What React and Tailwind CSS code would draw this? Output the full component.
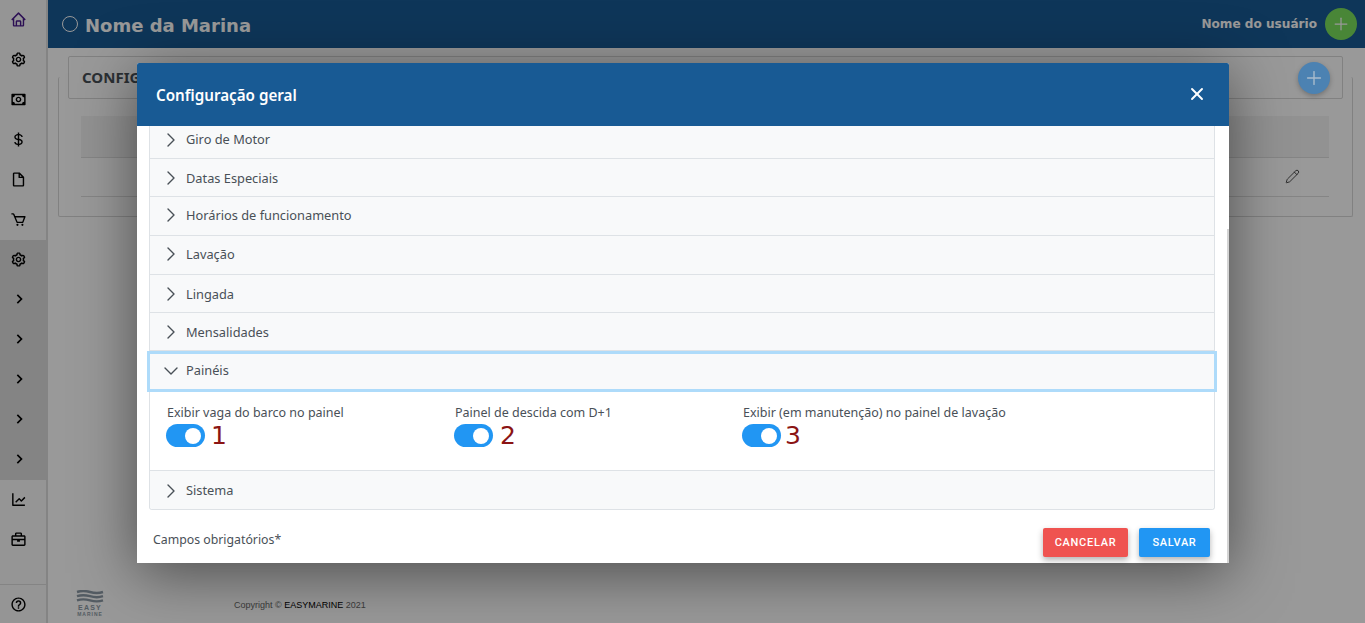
import React from "react";
import { ChevronRight, ChevronDown, X, Plus, Pencil } from "lucide-react";
import { BiHome, BiCog, BiMoney, BiDollar, BiFileBlank, BiCart, BiLineChart, BiBriefcase, BiHelpCircle, BiChevronRight } from "react-icons/bi";

const noto = "font-['Noto_Sans',sans-serif]";

function Side({ Icon, color = "text-black", chev }) {
  return (
    <div className="h-10 flex items-center justify-center w-[46px] pr-[9px] pb-[2px]">
      <Icon size={chev ? 20 : 17} className={color} />
    </div>
  );
}

function Row({ label, h = "h-[38.6px]", dy = "", ldy = "" }) {
  return (
    <div className={`${h} flex items-center border-b border-[#dee2e6] bg-[#f8f9fa] pl-[9px]`}>
      <ChevronRight size={24} strokeWidth={1.4} className={`text-[#495057] -mt-[3px] ${dy}`} />
      <span className={`ml-[3px] text-[12.8px] text-[#495057] ${noto} ${dy} ${ldy}`}>{label}</span>
    </div>
  );
}

function Toggle({ label, n, cls, numCls = "ml-[6px]" }) {
  return (
    <div className={cls}>
      <div className={`ml-[1px] text-[12.5px] leading-[17px] text-[#495057] ${noto}`}>{label}</div>
      <div className="flex items-center mt-[3px]">
        <div className="w-[39px] h-[23px] rounded-full bg-[#2196f3] flex items-center justify-end pr-[4px]">
          <div className="w-[16px] h-[16px] rounded-full bg-white" />
        </div>
        <span className={`${numCls} text-[25px] leading-[23px] text-[#8b1414] font-['DejaVu_Sans',sans-serif]`}>{n}</span>
      </div>
    </div>
  );
}

export default function App() {
  return (
    <div className="relative w-[1365px] h-[623px] overflow-hidden bg-white flex">
      <aside className="w-[48px] h-full border-r-2 border-[#dcdcdc] bg-[#f8f8f8] flex flex-col shrink-0">
        <Side Icon={BiHome} color="text-[#4a1a8c]" />
        <Side Icon={BiCog} />
        <Side Icon={BiMoney} />
        <Side Icon={BiDollar} />
        <Side Icon={BiFileBlank} />
        <Side Icon={BiCart} />
        <div className="bg-[#dcdcdc] w-[46px]">
          <Side Icon={BiCog} />
          <Side Icon={BiChevronRight} chev />
          <Side Icon={BiChevronRight} chev />
          <Side Icon={BiChevronRight} chev />
          <Side Icon={BiChevronRight} chev />
          <Side Icon={BiChevronRight} chev />
        </div>
        <Side Icon={BiLineChart} />
        <Side Icon={BiBriefcase} />
        <div className="mt-auto h-[39px] border-t border-[#dcdcdc] flex items-center justify-center pr-[9px]">
          <BiHelpCircle size={17} className="text-black" />
        </div>
      </aside>
      <div className="flex-1 flex flex-col min-w-0">
        <header className="h-12 shrink-0 bg-[#185a94] flex items-center pl-[14px] pr-[8px]">
          <div className="w-4 h-4 rounded-full border-[1.5px] border-white -mt-[1px]" />
          <span className="ml-[7px] text-[18px] font-bold text-white font-['DejaVu_Sans',sans-serif] mt-[2px]">Nome da Marina</span>
          <span className="ml-auto text-[12.1px] font-bold text-white font-['DejaVu_Sans',sans-serif] mt-[1px]">Nome do usuário</span>
          <div className="ml-[8px] w-8 h-8 rounded-full bg-[#7bdf5d] flex items-center justify-center">
            <Plus size={20} strokeWidth={1.5} className="text-white" />
          </div>
        </header>
        <main className="flex-1 flex flex-col pl-[10px] pr-[12px] pt-2">
          <div className="relative h-[169px]">
            <div className="absolute left-[10px] right-[10px] top-0 h-[43px] border border-[#d8d8d8] rounded-[2px] flex items-center pl-[13px] bg-white">
              <span className={`text-[15px] font-bold text-[#495057] ${noto}`}>CONFIGURAÇÕES</span>
            </div>
            <div className="absolute left-0 right-0 top-[21px] h-[140px] border border-[#d8d8d8] rounded-[2px] border-t-0" />
            <div className="absolute left-[23px] right-[24px] top-[60px] h-[42px] bg-[#f4f4f4] border-b border-[#dedede]" />
            <div className="absolute left-[23px] right-[24px] top-[102px] h-[39px] border-b border-[#dedede]" />
            <div className="absolute right-[53px] top-[113px]">
              <Pencil size={15} strokeWidth={1.4} className="text-[#333]" />
            </div>
          </div>
          <footer className="mt-auto flex items-center h-[34px] mb-[3px]">
            <div className="ml-[18px] w-[28px] flex flex-col items-center">
              <svg width="28" height="13" viewBox="0 0 28 13" fill="none" stroke="#8c9aa6" strokeWidth="2.4">
                <path d="M1 2q6-2 13 0t13 0M1 6.2q6-2 13 0t13 0M1 10.4q6-2 13 0t13 0" />
              </svg>
              <span className="mt-[1px] text-[7px] leading-[7px] font-bold tracking-[1.2px] text-[#8c9aa6] font-['Liberation_Sans',sans-serif]">EASY</span>
              <span className="text-[5px] leading-[6px] font-bold tracking-[1px] text-[#8c9aa6] font-['Liberation_Sans',sans-serif]">MARINE</span>
            </div>
            <span className="ml-[130px] mt-[6px] text-[9px] text-[#666] font-['Liberation_Sans',sans-serif]">
              Copyright © <span className="text-black">EASYMARINE</span> 2021
            </span>
          </footer>
        </main>
      </div>

      {/* overlay */}
      <div className="absolute inset-0 bg-black/40 z-10" />
      <div className="absolute left-[1298px] top-[62px] w-8 h-8 rounded-full bg-[#4c82b2] z-20 flex items-center justify-center shadow-[0_2px_5px_rgba(0,0,0,0.25)]">
        <Plus size={22} strokeWidth={1.5} className="text-[#a9bccd]" />
      </div>

      {/* modal */}
      <div className="absolute z-30 left-[137px] top-[63px] w-[1092px] h-[500px] bg-white rounded-t-[2px] shadow-[0_10px_60px_rgba(0,0,0,0.5)] flex flex-col">
        <div className="h-[63px] shrink-0 bg-[#185a94] rounded-t-[2px] flex items-center justify-between pl-[19px] pr-[22px]">
          <span className={`text-[15.2px] font-semibold text-white ${noto} mt-[2px]`}>Configuração geral</span>
          <X size={20} strokeWidth={2.3} className="text-white -mt-[2px]" />
        </div>
        <div className="relative flex-1 flex flex-col min-h-0 pl-[12px] pr-[14px]">
          <div className="absolute right-0 top-[103px] bottom-0 w-[2px] bg-[#d4d4d4]" />
          <div className="border-x border-b border-[#dee2e6] rounded-b-[3px] h-[384px] flex flex-col">
            <Row label="Giro de Motor" h="h-[33px]" dy="-mt-[5px]" />
            <Row label="Datas Especiais" h="h-[38px]" dy="mt-[1px]" ldy="mt-[3px]" />
            <Row label="Horários de funcionamento" h="h-[39px]" />
            <Row label="Lavação" h="h-[39px]" />
            <Row label="Lingada" h="h-[38px]" dy="mt-[1px]" ldy="mt-[3px]" />
            <Row label="Mensalidades" h="h-[38px]" dy="mt-[1px]" ldy="mt-[3px]" />
            <div className="relative h-[41px] flex items-center bg-[#f8f9fa] pl-[9px]">
              <ChevronDown size={24} strokeWidth={1.4} className="text-[#495057] -mt-[1px]" />
              <span className={`ml-[3px] text-[12.8px] text-[#495057] ${noto} -mt-[1px]`}>Painéis</span>
              <div className="absolute -left-[3px] -right-[3px] top-0 bottom-0 border-[3px] border-[#aedbfa]" />
            </div>
            <div className="h-[79px] border-b border-[#dee2e6] flex pt-[12px] pl-[16px]">
              <Toggle cls="w-[288px]" label="Exibir vaga do barco no painel" n="1" />
              <Toggle cls="w-[288px]" label="Painel de descida com D+1" n="2" numCls="ml-[7px]" />
              <Toggle cls="w-[288px]" label="Exibir (em manutenção) no painel de lavação" n="3" numCls="ml-[4px]" />
            </div>
            <Row label="Sistema" h="flex-1 border-b-0 rounded-b-[3px]" dy="mt-[1px]" />
          </div>
          <div className="flex-1 flex items-start justify-between pl-[4px] pr-[5px] pt-[18px]">
            <span className={`text-[12.3px] leading-[24px] text-[#495057] ${noto}`}>Campos obrigatórios*</span>
            <div className="flex gap-[11px]">
              <button className="w-[85px] h-[29px] pt-[1px] rounded-[2px] bg-[#ef5350] text-white text-[11px] font-medium tracking-[0.7px] font-['Roboto',sans-serif] shadow-[0_3px_6px_rgba(0,0,0,0.3)]">CANCELAR</button>
              <button className="w-[71px] h-[29px] pt-[1px] rounded-[2px] bg-[#2196f3] text-white text-[11px] font-medium tracking-[0.7px] font-['Roboto',sans-serif] shadow-[0_3px_6px_rgba(0,0,0,0.3)]">SALVAR</button>
            </div>
          </div>
        </div>
      </div>
    </div>
  );
}
